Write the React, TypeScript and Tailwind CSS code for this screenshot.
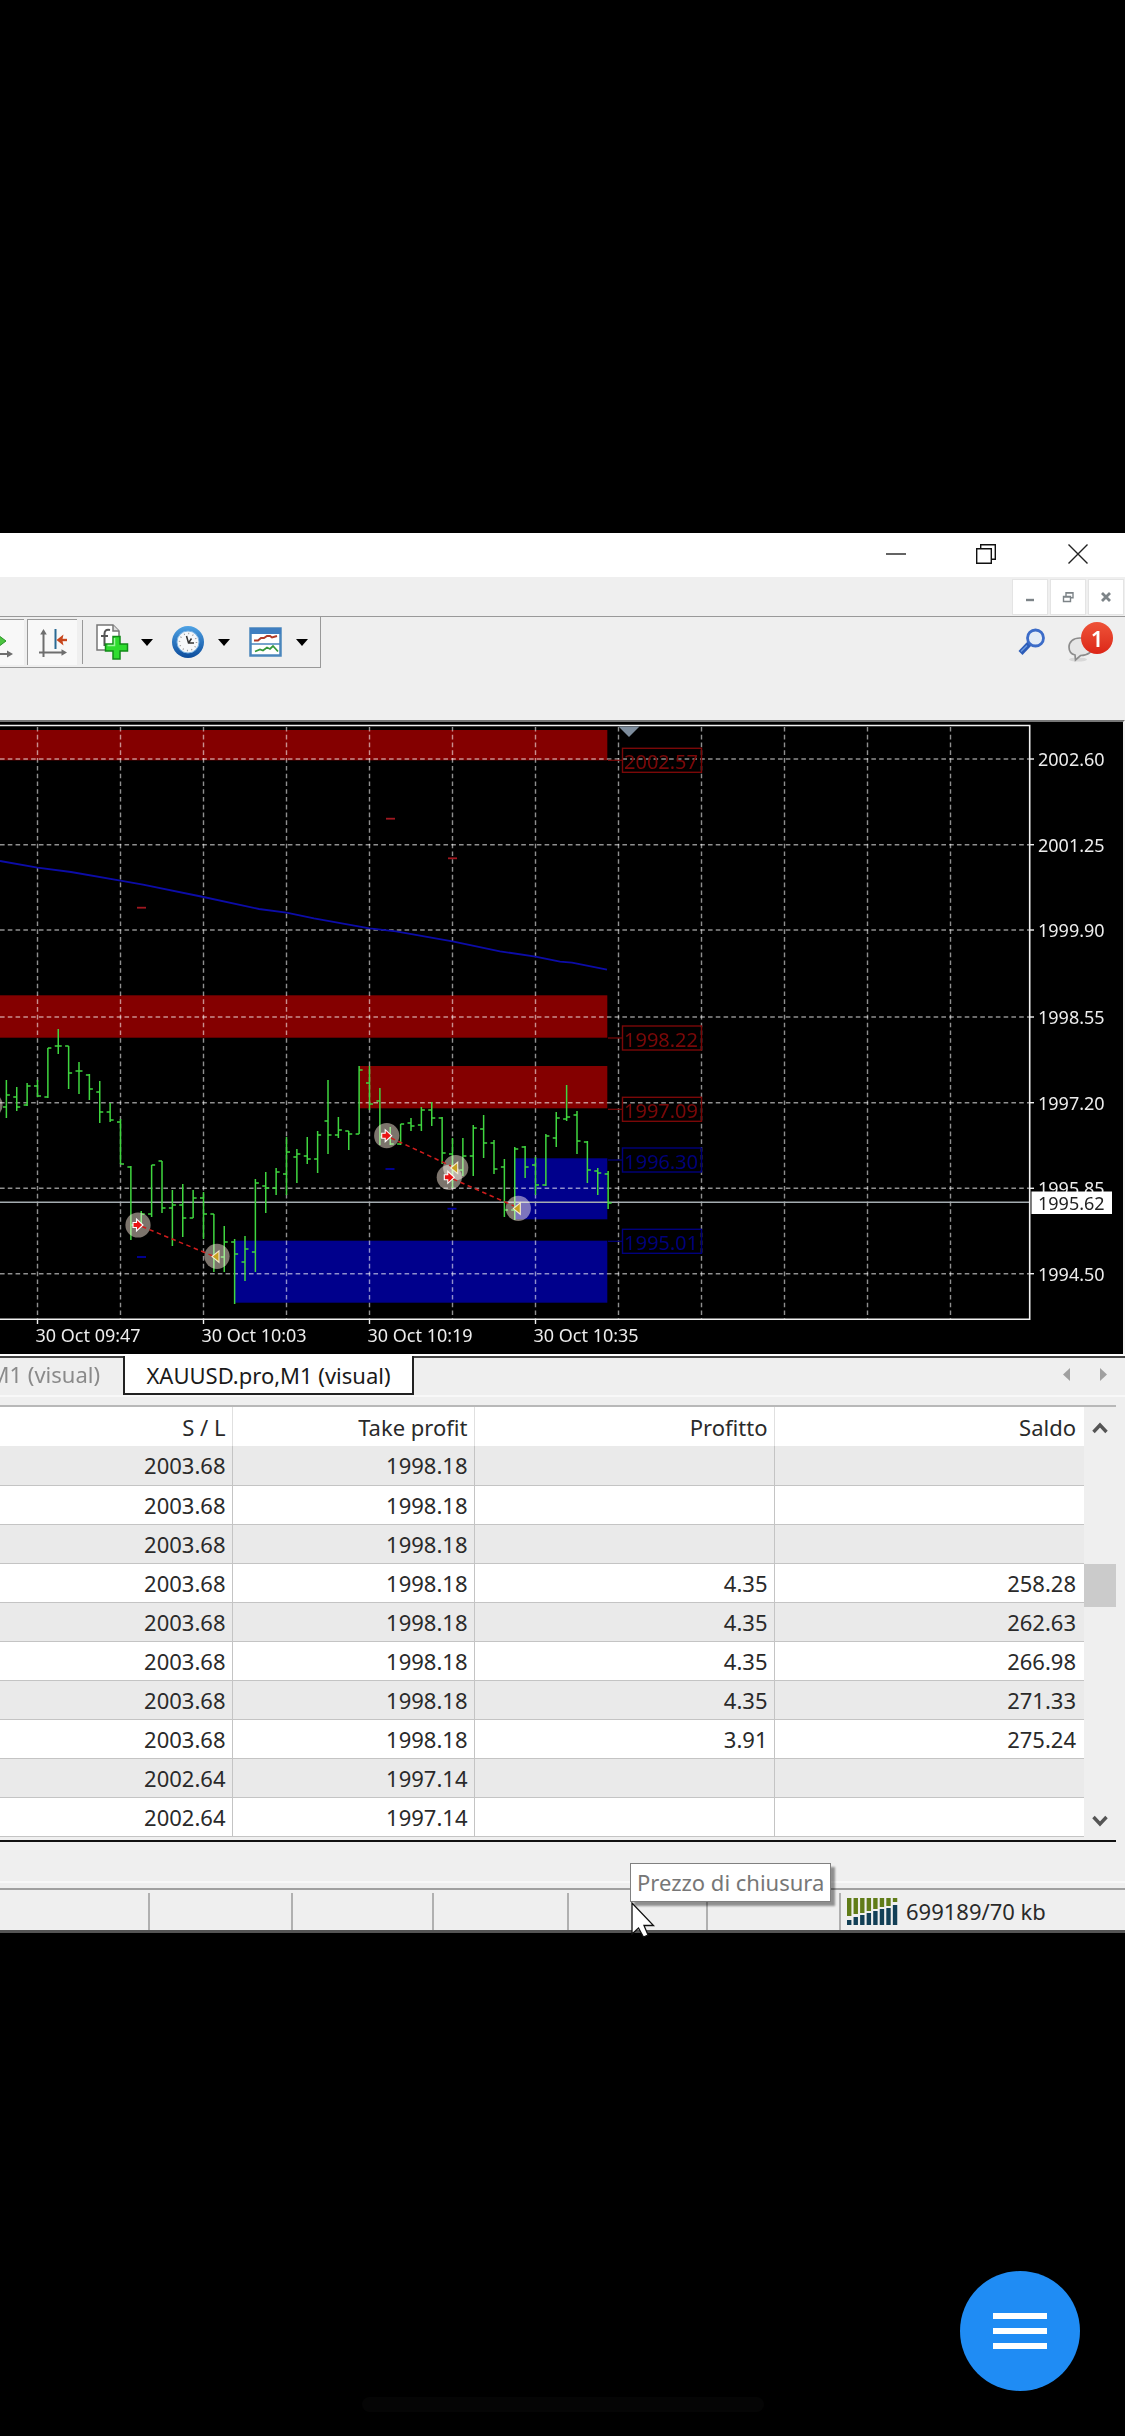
import type { ReactNode } from "react";

type Bar = [high: number, low: number, open: number, close: number];

// First bar sits three steps left of the 09:47 grid line
const bars: Bar[] = [
  [358, 396, 385, 373],
  [365, 389, 375, 385],
  [361, 384, 383, 364],
  [358, 375, 364, 374],
  [326, 376, 375, 326],
  [307, 332, 324, 324],
  [324, 367, 324, 351],
  [340, 372, 349, 349],
  [352, 378, 353, 367],
  [359, 401, 370, 390],
  [381, 400, 390, 398],
  [397, 442, 400, 442],
  [444, 518, 445, 503],
  [489, 505, 503, 492],
  [443, 495, 492, 443],
  [439, 491, 439, 486],
  [468, 524, 486, 483],
  [462, 515, 483, 496],
  [468, 496, 496, 476],
  [470, 517, 476, 492],
  [492, 550, 492, 535],
  [504, 550, 535, 520],
  [517, 582, 520, 532],
  [514, 559, 540, 527],
  [457, 550, 530, 461],
  [450, 491, 464, 466],
  [446, 473, 466, 450],
  [415, 473, 452, 430],
  [427, 461, 435, 432],
  [415, 442, 434, 437],
  [409, 451, 437, 413],
  [358, 432, 399, 413],
  [395, 416, 413, 408],
  [409, 428, 409, 412],
  [344, 412, 412, 348],
  [344, 388, 361, 382],
  [366, 423, 379, 415],
  [405, 423, 415, 422],
  [402, 423, 422, 402],
  [396, 409, 401, 404],
  [385, 409, 403, 388],
  [380, 404, 388, 396],
  [395, 442, 396, 431],
  [416, 466, 432, 448],
  [416, 454, 448, 434],
  [403, 454, 434, 406],
  [393, 436, 407, 421],
  [418, 452, 421, 447],
  [437, 495, 445, 488],
  [425, 498, 488, 427],
  [424, 456, 425, 445],
  [435, 473, 443, 463],
  [412, 464, 463, 414],
  [390, 425, 416, 396],
  [363, 399, 397, 395],
  [389, 432, 393, 419],
  [419, 461, 420, 448],
  [446, 473, 449, 451],
  [449, 487, 452, 481],
];

const barX = (i: number) => 37.5 + (i - 3) * 10.375;

const gridX = [37.5, 120.5, 203.5, 286.5, 369.5, 452.5, 535.5, 618.5, 701.5, 784.5, 867.5, 950.5];

const prices = [
  { label: "2002.60", y: 37 },
  { label: "2001.25", y: 122.7 },
  { label: "1999.90", y: 208 },
  { label: "1998.55", y: 295 },
  { label: "1997.20", y: 380.7 },
  { label: "1995.85", y: 466.3 },
  { label: "1994.50", y: 551.7 },
];

const times = [
  { label: "30 Oct 09:47", x: 37.5 },
  { label: "30 Oct 10:03", x: 203.5 },
  { label: "30 Oct 10:19", x: 369.5 },
  { label: "30 Oct 10:35", x: 535.5 },
];

const zones = [
  { x: 0, y: 8, h: 30.3, color: "#840000" },
  { x: 0, y: 273.3, h: 42.4, color: "#840000" },
  { x: 359.5, y: 344, h: 42.3, color: "#840000" },
  { x: 515, y: 436.3, h: 61, color: "#00008c" },
  { x: 235, y: 518.7, h: 62, color: "#00008c" },
];

const levels = [
  { label: "2002.57", y: 38.3, color: "#7a0808" },
  { label: "1998.22", y: 316, color: "#7a0808" },
  { label: "1997.09", y: 387.3, color: "#7a0808" },
  { label: "1996.30", y: 438, color: "#00007c" },
  { label: "1995.01", y: 519.3, color: "#00007c" },
];

const dashes = [
  { x: 390.5, y: 96.7, color: "#a01820" },
  { x: 452.5, y: 136.3, color: "#a01820" },
  { x: 141.5, y: 185.7, color: "#a01820" },
  { x: 141.5, y: 535, color: "#0000a0" },
  { x: 390, y: 447, color: "#0000a0" },
  { x: 452, y: 486.7, color: "#0000a0" },
];

const markers = [
  { x: -10, y: 383, kind: "entry" },
  { x: 138, y: 503, kind: "entry" },
  { x: 217, y: 534.3, kind: "exit" },
  { x: 386.7, y: 413.7, kind: "entry" },
  { x: 455.7, y: 445.7, kind: "exit" },
  { x: 449.3, y: 455.3, kind: "entry" },
  { x: 518.3, y: 486.3, kind: "exit" },
];

const trades = [
  [142, 504.5, 213, 534],
  [391, 416, 451, 444],
  [453, 457, 514, 484],
];

const rows = [
  ["2003.68", "1998.18", "", ""],
  ["2003.68", "1998.18", "", ""],
  ["2003.68", "1998.18", "", ""],
  ["2003.68", "1998.18", "4.35", "258.28"],
  ["2003.68", "1998.18", "4.35", "262.63"],
  ["2003.68", "1998.18", "4.35", "266.98"],
  ["2003.68", "1998.18", "4.35", "271.33"],
  ["2003.68", "1998.18", "3.91", "275.24"],
  ["2002.64", "1997.14", "", ""],
  ["2002.64", "1997.14", "", ""],
];

function TitleBar() {
  return (
    <div className="flex h-11 items-center justify-end bg-white pr-[29px] pb-[2px]">
      <button aria-label="Minimize" className="mr-[54px] p-2">
        <svg className="block" width="20" height="20" viewBox="0 0 20 20">
          <path d="M0 10h20" stroke="#222" strokeWidth="1.4" />
        </svg>
      </button>
      <button aria-label="Restore" className="mr-14 p-2">
        <svg className="block" width="20" height="20" viewBox="0 0 20 20" fill="none" stroke="#111" strokeWidth="1.4">
          <path d="M.7 4.7h14.6v14.6H.7zM4.7 4.7V.7h14.6v14.6h-4" />
        </svg>
      </button>
      <button aria-label="Close" className="p-2">
        <svg className="block" width="20" height="20" viewBox="0 0 20 20">
          <path d="M.5.5l19 19M19.5.5l-19 19" stroke="#222" strokeWidth="1.4" />
        </svg>
      </button>
    </div>
  );
}

function ChildButton({ label, children }: { label: string; children: ReactNode }) {
  return (
    <button
      aria-label={label}
      className="flex h-9 w-9 items-center justify-center border border-[#e4e4e4] bg-white"
    >
      <svg width="12" height="12" viewBox="0 0 12 12" fill="none" stroke="#7d8488">
        {children}
      </svg>
    </button>
  );
}

function ChildWindowBar() {
  return (
    <div className="flex h-10 items-center justify-end gap-[2px] border-b border-[#999] bg-[#efefef] pr-px">
      <ChildButton label="Minimize chart">
        <path d="M2 9h8" strokeWidth="2.4" />
      </ChildButton>
      <ChildButton label="Restore chart">
        <path d="M1.5 5.5h7v5h-7zM1.5 6h7M4 5V1.8h7v5H9M4 2h7" strokeWidth="1.4" />
      </ChildButton>
      <ChildButton label="Close chart">
        <path d="M2 2l8 8M10 2l-8 8" strokeWidth="2.8" />
      </ChildButton>
    </div>
  );
}

function Caret() {
  return (
    <svg width="12" height="7" viewBox="0 0 12 7">
      <path d="M0 0h12L6 7z" />
    </svg>
  );
}

function Toolbar() {
  return (
    <div className="flex h-[103px] items-start justify-between bg-[#efefef]">
      <div className="flex h-[51px] items-center border-r border-b border-[#999]">
        <button aria-label="Auto scroll" className="h-[46px] w-6 border-t border-[#999] bg-[#f8f8f8]">
          <svg width="24" height="44" viewBox="0 0 24 44">
            <path d="M-6 11l12 9-12 9z" fill="#4cc440" stroke="#2a9426" />
            <path d="M0 33h8" stroke="#6e6e6e" strokeWidth="2" />
            <path d="M7 29.500l6 3.500-6 3.500z" fill="#6e6e6e" />
          </svg>
        </button>
        <button
          aria-label="Chart shift"
          className="ml-[3px] flex h-[46px] w-[50px] items-center justify-center border-t border-l border-[#999] bg-[#f8f8f8]"
        >
          <svg width="28" height="28" viewBox="0 0 28 28">
            <path d="M4.500 4v24M0 23.500h24" stroke="#6e6e6e" strokeWidth="2" />
            <path d="M4.500 0l3.300 5.500H1.200zM28 23.500l-5.500 3.300v-6.600z" fill="#6e6e6e" />
            <path d="M16.500 0v20" stroke="#2a6a94" strokeWidth="2" />
            <path d="M28 11h-8" stroke="#c8461c" strokeWidth="2.400" />
            <path d="M17.500 11l7-5.500-1.200 5.500 1.200 5.500z" fill="#c8461c" />
          </svg>
        </button>
        <span className="ml-[5px] h-11 w-px bg-[#999]" />
        <button aria-label="Indicators" className="ml-[13px] flex items-center gap-3">
          <svg width="33" height="36" viewBox="0 0 33 36">
            <path d="M1 1h16l6 6v19H1z" fill="#fff" stroke="#777" strokeWidth="1.500" />
            <path d="M17 1v6h6" fill="#ddd" stroke="#777" strokeWidth="1.500" />
            <path d="M14 6c-4-1-5.500 1-5.500 4v12M5 12h7" fill="none" stroke="#555" strokeWidth="2" />
            <path
              d="M17 12.500h7v7.500h7.500v7H24v8h-7v-8H9.500v-7H17z"
              fill="#2fdc2f"
              stroke="#128a18"
              strokeWidth="1.500"
            />
            <path d="M18.500 14v7.500h-7" fill="none" stroke="#9df59d" strokeWidth="1.500" />
          </svg>
          <Caret />
        </button>
        <button aria-label="Periods" className="ml-[18px] flex items-center gap-[13px]">
          <svg width="34" height="34" viewBox="0 0 34 34">
            <defs>
              <linearGradient id="rim" x1="0" y1="0" x2="0" y2="1">
                <stop offset="0" stopColor="#4ea2e4" />
                <stop offset="1" stopColor="#0c4c9c" />
              </linearGradient>
            </defs>
            <circle cx="17" cy="17" r="16" fill="url(#rim)" />
            <circle cx="17" cy="17" r="11" fill="#f6f8fa" stroke="#7cb4e4" />
            <circle cx="17" cy="17" r="8.500" fill="none" stroke="#999" strokeWidth="1.500" strokeDasharray="1 3.450" />
            <path d="M15.500 11l2 7H23M17.500 18l3-4.500" fill="none" stroke="#333" strokeWidth="1.500" />
          </svg>
          <Caret />
        </button>
        <button aria-label="Templates" className="mr-3 ml-[19px] flex items-center gap-[13px]">
          <svg width="34" height="30" viewBox="0 0 34 30">
            <rect x="1.500" y="1.500" width="30" height="27" fill="#fff" stroke="#4a86bc" strokeWidth="2.500" />
            <path d="M1 1h31v6H1z" fill="#3f7ec0" />
            <path d="M2 17h29" stroke="#4a86bc" strokeWidth="1.500" />
            <path d="M5 13.500h4l3-2.500h3l3-2h3l2 1.500 5-1.500" fill="none" stroke="#b03a28" strokeWidth="2" />
            <path d="M6 24.500l5-2 3 1 4-3 3 1.500 3-3 5 5.500" fill="none" stroke="#35983c" strokeWidth="1.800" />
          </svg>
          <Caret />
        </button>
      </div>
      <div className="flex items-start gap-[22px] pt-[5px] pr-3">
        <button aria-label="Search" className="pt-[6px]">
          <svg width="28" height="28" viewBox="0 0 28 28">
            <path d="M2.500 25L12 15" stroke="#2c5cb8" strokeWidth="5.500" />
            <path d="M3 23.500l6-6" stroke="#6c9ae0" strokeWidth="1.500" />
            <circle cx="17.500" cy="10" r="8" fill="#e4ecf6" stroke="#3c6cc8" strokeWidth="2.800" />
          </svg>
        </button>
        <button aria-label="Notifications" className="relative h-10 w-[45px]">
          <svg className="block" width="45" height="40" viewBox="0 0 45 40">
            <ellipse cx="10" cy="37.500" rx="9" ry="2" fill="#d8d8d8" />
            <path
              d="M12 16c-7 0-11 4-11 9 0 4 2 7 6 8l.5 5 5-4.500c8 0 12-4 12-9s-5-8.500-12.500-8.500z"
              fill="#e6e6e6"
              stroke="#8c8c8c"
              strokeWidth="1.700"
            />
          </svg>
          <span className="absolute top-0 right-0 flex h-8 w-8 items-center justify-center rounded-full bg-gradient-to-b from-[#ee5238] to-[#dc2416] text-[22px] leading-8 font-semibold text-white">
            1
          </span>
        </button>
      </div>
    </div>
  );
}

function Chart() {
  return (
    <div className="border-t-2 border-r-2 border-t-[#777] border-r-[#f4f4f4] bg-black">
      <svg
        className="block h-auto w-full"
        viewBox="0 0 1123 632"
        role="img"
        aria-label="XAUUSD.pro, M1"
        fontFamily='"Noto Sans", sans-serif'
      >
        {zones.map((z) => (
          <rect key={z.y} x={z.x} y={z.y} width={607.3 - z.x} height={z.h} fill={z.color} />
        ))}

        {/* Grid */}
        <g stroke="#ffffff" strokeOpacity="0.56" strokeWidth="1.4" strokeDasharray="4.6 3.18">
          {gridX.map((x) => (
            <path key={x} d={`M${x} 5V597`} />
          ))}
          {prices.map((p) => (
            <path key={p.y} d={`M0 ${p.y}H1029`} />
          ))}
        </g>

        {/* Moving average */}
        <path
          d="M0 139L37.500 145.700 71 150 120.500 158.700 143 162.700 203.500 175 259 187 286.500 190.700 314 196.300 369.500 206.300 396 209.300 452.500 219.300 500 229.300 535.500 234.700 560 239.700 572 240.700 607 247.700"
          fill="none"
          stroke="#0c0ca8"
          strokeWidth="1.8"
        />

        {dashes.map((d) => (
          <path key={`${d.x}-${d.y}`} d={`M${d.x - 4.5} ${d.y}h9`} stroke={d.color} strokeWidth="1.8" />
        ))}

        {/* Price levels */}
        {levels.map((l) => (
          <g key={l.label}>
            <path d={`M608 ${l.y}h14`} stroke={l.color} strokeWidth="1.2" />
            <rect x="622.5" y={l.y - 12} width="79" height="24" fill="none" stroke={l.color} strokeWidth="1.4" />
            <text x="624" y={l.y + 8.7} fontSize="20" fill={l.color}>
              {l.label}
            </text>
          </g>
        ))}

        <path d="M0 480.300H1030" stroke="#a4acb0" strokeWidth="1.4" />

        {/* OHLC bars */}
        <g stroke="#3fd63f" strokeWidth="1.5">
          {bars.map(([high, low, open, close], i) => (
            <path
              key={i}
              d={`M${barX(i)} ${high}V${low}M${barX(i) - 3.5} ${open}h3.5M${barX(i)} ${close}h3.5`}
            />
          ))}
        </g>

        {markers.map((m) => (
          <circle key={`${m.x}`} className="mix-blend-screen" cx={m.x} cy={m.y} r="12.6" fill="#7c746c" />
        ))}
        <g stroke="#d01c1c" strokeWidth="1.5" strokeDasharray="4.500 3.500">
          {trades.map(([x1, y1, x2, y2]) => (
            <path key={x1} d={`M${x1} ${y1}L${x2} ${y2}`} />
          ))}
        </g>
        {markers.map((m) =>
          m.kind === "entry" ? (
            <path
              key={m.x}
              d={`M${m.x - 5} ${m.y - 2.500}h3.500v-3.500l6.500 6-6.500 6v-3.500h-3.500z`}
              fill="#e81414"
              stroke="#fff"
              strokeWidth="1.1"
            />
          ) : (
            <path
              key={m.x}
              d={`M${m.x + 2} ${m.y - 5.500}v11.500l-7-5.700z`}
              fill="#c8a020"
              stroke="#f4ecd0"
              strokeWidth="1.1"
            />
          ),
        )}

        {/* Frame and axes */}
        <path d="M0 3.500H1029.700V597.300H0" fill="none" stroke="#f0f0f0" strokeWidth="1.6" />
        <path d="M618.500 4.500h21l-10.500 10.500z" fill="#7d8c9c" />
        {prices.map((p) => (
          <g key={p.label}>
            <path d={`M1030 ${p.y}h4`} stroke="#f0f0f0" strokeWidth="1.4" />
            <text x="1038" y={p.y + 7} fontSize="18" fill="#ececec">
              {p.label}
            </text>
          </g>
        ))}
        <rect x="1031.500" y="469.500" width="80.500" height="22.500" fill="#fff" />
        <text x="1038" y="487.500" fontSize="18" fill="#222">
          1995.62
        </text>
        {times.map((t) => (
          <g key={t.label}>
            <path d={`M${t.x} 597v5`} stroke="#f0f0f0" strokeWidth="1.4" />
            <text x={t.x - 2} y="620" fontSize="18" fill="#ececec">
              {t.label}
            </text>
          </g>
        ))}
      </svg>
    </div>
  );
}

function Tabs() {
  return (
    <div className="flex h-[43px] items-start border-t-2 border-b-2 border-t-white border-b-[#f8f8f8] bg-[#efefef]">
      <button className="flex h-[36px] w-[123px] justify-end overflow-hidden border-t-2 border-[#444] pr-[23px] leading-8 whitespace-nowrap text-[#8a8a8a]">
        M1 (visual)
      </button>
      <button className="h-[39px] w-[291px] border-x-2 border-b-2 border-[#222] bg-white leading-9 whitespace-nowrap text-[#1a1a1a]">
        XAUUSD.pro,M1 (visual)
      </button>
      <div className="flex h-[36px] flex-1 items-center justify-end gap-[30px] border-t-2 border-[#444] pr-[18px] pb-[2px]">
        <button aria-label="Previous tab">
          <svg className="block" width="7" height="13" viewBox="0 0 7 13">
            <path d="M7 0v13L0 6.500z" fill="#a0a0a0" />
          </svg>
        </button>
        <button aria-label="Next tab">
          <svg className="block" width="7" height="13" viewBox="0 0 7 13">
            <path d="M0 0v13l7-6.500z" fill="#a0a0a0" />
          </svg>
        </button>
      </div>
    </div>
  );
}

function Scrollbar() {
  return (
    <div className="flex w-8 flex-col items-center bg-[#efefef]">
      <button aria-label="Scroll up" className="h-10">
        <svg width="16" height="13" viewBox="0 0 16 13">
          <path d="M1.500 11L8 4l6.500 7" fill="none" stroke="#555" strokeWidth="3.400" />
        </svg>
      </button>
      <div className="mt-[117px] h-[43px] w-full bg-[#cbcbcb]" />
      <button aria-label="Scroll down" className="mt-auto h-9">
        <svg width="16" height="13" viewBox="0 0 16 13">
          <path d="M1.500 2L8 9l6.500-7" fill="none" stroke="#555" strokeWidth="3.400" />
        </svg>
      </button>
    </div>
  );
}

function Results() {
  return (
    <div className="bg-[#efefef] pt-2 pr-[9px]">
      <div className="flex border-t-2 border-b-2 border-t-[#b8b8b8] border-b-[#111]">
        <div className="flex-1 bg-[#efefef] pb-[3px]">
          <table className="w-full table-fixed border-collapse text-right text-[#2a2a2a]">
            <colgroup>
              <col className="w-[232px]" />
              <col className="w-[242px]" />
              <col className="w-[300px]" />
              <col />
            </colgroup>
            <thead>
              <tr className="h-[39px] bg-white">
                {["S / L", "Take profit", "Profitto", "Saldo"].map((h) => (
                  <th
                    key={h}
                    className="border-r border-[#e0e0e0] p-0 pr-[6px] leading-9 font-normal last:border-r-0 last:pr-2"
                  >
                    {h}
                  </th>
                ))}
              </tr>
            </thead>
            <tbody>
              {rows.map((row, i) => (
                <tr key={i} className="h-[39px] border-b border-[#c4c4c4] odd:bg-[#eaeaea] even:bg-white">
                  {row.map((cell, j) => (
                    <td
                      key={j}
                      className="border-r border-[#c4c4c4] p-0 pr-[6px] leading-9 last:border-r-0 last:pr-2"
                    >
                      {cell}
                    </td>
                  ))}
                </tr>
              ))}
            </tbody>
          </table>
        </div>
        <Scrollbar />
      </div>
    </div>
  );
}

function Traffic() {
  const green = [18, 16, 15, 13, 11, 9, 8, 4];
  const navy = [5, 8, 10, 12, 14, 16, 17, 20];
  return (
    <svg width="51" height="27" viewBox="0 0 51 27">
      {green.map((h, i) => (
        <g key={i}>
          <rect x={i * 6.55} y="0" width="4.4" height={h} fill="#607c18" />
          <rect x={i * 6.55} y={27 - navy[i]} width="4.4" height={navy[i]} fill="#123f56" />
        </g>
      ))}
    </svg>
  );
}

function StatusBar() {
  return (
    <div className="relative">
      <div className="h-[41px] border-b-2 border-[#f8f8f8] bg-[#efefef]" />
      <div className="flex h-[50px] items-end border-b-[3px] border-[#555] bg-[#efefef] pt-[5px]">
        <div className="flex h-full w-full items-end border-t-2 border-[#a0a0a0]">
          <div className="h-[37px] w-[150px] border-r-2 border-[#b0b0b0]" />
          <div className="h-[37px] w-[143px] border-r-2 border-[#b0b0b0]" />
          <div className="h-[37px] w-[141px] border-r-2 border-[#b0b0b0]" />
          <div className="h-[37px] w-[135px] border-r-2 border-[#b0b0b0]" />
          <div className="h-[37px] w-[139px] border-r-2 border-[#b0b0b0]" />
          <div className="h-[37px] w-[133px] border-r-2 border-[#b0b0b0]" />
          <div className="flex h-[37px] flex-1 items-center gap-2 pl-[6px] whitespace-nowrap text-[#2a2a2a]">
            <Traffic />
            699189/70 kb
          </div>
        </div>
      </div>
      <div
        role="tooltip"
        className="absolute top-[21px] left-[630px] h-[39px] border border-[#808080] bg-white px-[6px] leading-[37px] whitespace-nowrap text-[#777] shadow-[4px_4px_2px_rgba(0,0,0,0.4)]"
      >
        Prezzo di chiusura
      </div>
      <svg className="absolute top-[60px] left-[631px]" width="26" height="36" viewBox="0 0 26 36">
        <path
          d="M1 1v31l6.500-6 5 9 4.500-2-4-9.500h9.500z"
          fill="#fff"
          stroke="#111"
          strokeWidth="1.300"
        />
      </svg>
    </div>
  );
}

export default function App() {
  return (
    <main className="flex min-h-screen flex-col bg-black pt-[533px] font-['Noto_Sans',sans-serif] text-[22px]">
      <TitleBar />
      <ChildWindowBar />
      <Toolbar />
      <Chart />
      <Tabs />
      <Results />
      <StatusBar />

      <div className="mt-auto flex flex-col pb-6">
        <button
          aria-label="Menu"
          className="mr-[45px] mb-[6px] flex h-[120px] w-[120px] flex-col items-center justify-center gap-[9px] self-end rounded-full bg-[#1f8cf4]"
        >
          <span className="h-[6px] w-[54px] bg-white" />
          <span className="h-[6px] w-[54px] bg-white" />
          <span className="h-[6px] w-[54px] bg-white" />
        </button>
        <div className="h-[15px] w-[402px] self-center rounded-full bg-[#050505]" />
      </div>
    </main>
  );
}
